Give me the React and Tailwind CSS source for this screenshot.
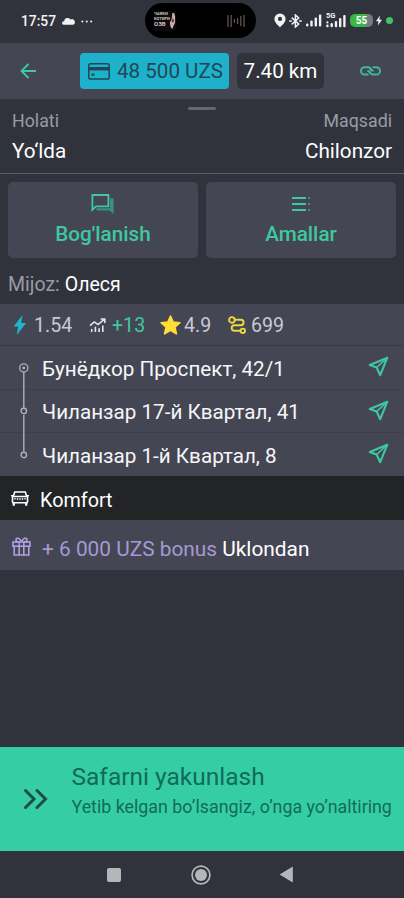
const stops = [
  { id: 1, address: "Бунёдкор Проспект, 42/1", start: true },
  { id: 2, address: "Чиланзар 17-й Квартал, 41" },
  { id: 3, address: "Чиланзар 1-й Квартал, 8" },
];

const Signal = ({ className }) => (
  <svg className={className} viewBox="0 0 16 13" fill="#f1f1f3">
    <rect x="0" y="9.5" width="2.4" height="3" rx="1" />
    <rect x="4.3" y="6.5" width="2.4" height="6" rx="1" />
    <rect x="8.6" y="3.5" width="2.4" height="9" rx="1" />
    <rect x="12.9" y="0.5" width="2.4" height="12" rx="1" />
  </svg>
);

const StatusBar = () => (
  <div className="flex h-[43px] shrink-0 items-start text-[#f1f1f3]">
    <div className="flex h-[42px] w-[145px] items-center pl-[21px]">
      <span className="w-[36px] whitespace-nowrap text-[13.8px] font-medium">17:57</span>
      <svg className="ml-[5px] h-[8px] w-[13px]" viewBox="0 0 13 8" fill="currentColor">
        <path d="M1.6 7.8A1.8 1.8 0 0 1 2.1 4.2 3.5 3.5 0 0 1 8.4 2.4 2.8 2.8 0 0 1 11.2 7.8Z" />
      </svg>
      <svg className="ml-[6px] h-[3px] w-[12px]" viewBox="0 0 12 3" fill="currentColor">
        <circle cx="1.4" cy="1.5" r="1" />
        <circle cx="5.8" cy="1.5" r="1" />
        <circle cx="10.2" cy="1.5" r="1" />
      </svg>
    </div>

    {/* Media pill around the camera */}
    <div className="mt-[3px] flex h-[35px] w-[111px] items-center justify-between rounded-full bg-black pl-[9px] pr-[11px]">
      <div className="relative flex h-[20px] w-[22px] flex-col bg-[#0e0b0c] pt-[1px] font-bold text-[#c9c2c1]">
        <span className="text-[4px] leading-[4px]">ЧАЙКИ</span>
        <span className="text-[4px] leading-[5px]">КОТИРИ</span>
        <span className="text-[6px] leading-[6px]">ОЗВ</span>
        <svg className="absolute right-0 top-0 h-[20px] w-[8px]" viewBox="0 0 9 20">
          <path d="M5 1 7 1 8 5 8 12 6 16 5 19 3 17 2 12 4 8Z" fill="#c5b0ab" />
          <path d="M5 7 7 9 6 12 4 11Z" fill="#6f3434" />
        </svg>
      </div>
      <svg className="h-[16px] w-[18px]" viewBox="0 0 18 16" stroke="#61524f" strokeWidth="1.3">
        <path d="M1 2V14M4.2 2V14M7.4 6V10M10.6 5V11M13.8 3V13M17 2V14" />
      </svg>
    </div>

    <div className="flex h-[41px] items-center">
      <svg className="ml-[18px] h-[15px] w-[12px]" viewBox="0 0 12 15" fillRule="evenodd" fill="currentColor">
        <path d="M6 .5A5.6 5.6 0 0 0 .4 6C.4 9.5 4 12 6 14.5 8 12 11.6 9.5 11.6 6A5.6 5.6 0 0 0 6 .5ZM6 3.8a2.1 2.1 0 1 1 0 4.2 2.1 2.1 0 0 1 0-4.2Z" />
      </svg>
      <svg className="ml-[3px] h-[14px] w-[13px]" viewBox="0 0 13 14" fill="none" stroke="currentColor" strokeWidth="1.5">
        <path d="m2.7 3.6 7 6.4-3.3 3V1l3.3 3-7 6.4" />
        <path d="M.7 7h1.6M10.7 7h1.6" strokeLinecap="round" />
      </svg>
      <Signal className="ml-[4px] h-[13px] w-[16px]" />
      <div className="relative ml-[4px] h-[15px] w-[20px]">
        <span className="absolute -top-[1px] left-0 text-[7.5px] font-bold leading-[7px]">5G</span>
        <svg className="h-[15px] w-[20px]" viewBox="0 0 20 15" fill="currentColor">
          <circle cx="1.4" cy="9.4" r="1.1" />
          <rect x="0.2" y="11.5" width="2.4" height="2.7" rx="1" />
          <rect x="4.5" y="10" width="2.4" height="4.2" rx="1" />
          <rect x="8.8" y="8" width="2.4" height="6.2" rx="1" />
          <rect x="13" y="5" width="2.4" height="9.2" rx="1" />
          <rect x="17.2" y="2" width="2.4" height="12.2" rx="1" />
        </svg>
      </div>
      <div className="ml-[4px] flex h-[13px] w-[23px] items-center justify-center rounded-[5px] bg-linear-to-r from-[#37b944] from-70% to-[#77797f] to-70% text-[10px] font-bold leading-none text-white">
        55
      </div>
      <svg className="ml-[3px] h-[11px] w-[6px]" viewBox="0 0 6 10" fill="currentColor">
        <path d="M4 0 0 5.7H2.5L1.9 10 6 4.2H3.4Z" />
      </svg>
      <span className="ml-[4px] size-[7px] rounded-full bg-[#3fc667]" />
    </div>
  </div>
);

const Header = () => (
  <div className="flex h-[56px] shrink-0 items-center bg-[#454653]">
    <svg className="ml-[20px] h-[16px] w-[17px]" viewBox="0 0 17 16" fill="none" stroke="#3fcba0" strokeWidth="1.8">
      <path d="M16 8H1.5M8.5 1 1.5 8l7 7" />
    </svg>
    <div className="ml-[43px] flex h-[36px] w-[149px] items-center rounded-[4px] bg-[#1eb1cb] pl-[8px] text-[#224754]">
      <svg className="h-[17px] w-[22px]" viewBox="0 0 22 17" fill="none" stroke="currentColor">
        <rect x=".8" y=".8" width="20.4" height="15.2" rx="1.8" strokeWidth="1.5" />
        <path d="M1 5.7H21" strokeWidth="3.4" />
        <path d="M3.5 11.6H6.5" strokeWidth="2.2" />
      </svg>
      <span className="ml-[7px] whitespace-nowrap text-[20.6px]">48 500 UZS</span>
    </div>
    <div className="ml-[8px] flex h-[36px] w-[87px] items-center justify-center whitespace-nowrap rounded-[5px] bg-[#31333c] text-[20.6px] text-white">
      7.40 km
    </div>
    <svg className="ml-[36px] h-[10px] w-[21px]" viewBox="0 0 21 10" fill="none" stroke="#3fb895" strokeWidth="2" strokeLinecap="round">
      <path d="M7.6 8.6H4.7a3.7 3.7 0 0 1 0-7.4h3.2c1.9 0 3 1.3 3 3.2" />
      <path d="M13.4 1.2h2.9a3.7 3.7 0 0 1 0 7.4h-3.2c-2.6 0-2.8-2.4-5-3.6" />
      <path d="M10.6 2.6 13 5" strokeWidth="1.6" />
    </svg>
  </div>
);

const TripStatus = () => (
  <div className="flex h-[75px] shrink-0 flex-col border-b border-[#5c5e66]">
    <div className="mx-auto mt-[8px] h-[3px] w-[28px] shrink-0 rounded-full bg-[#65676f]" />
    <div className="flex h-[22px] items-center justify-between px-[12px] text-[17.8px] leading-[22px] text-[#9a9ba4]">
      <span>Holati</span>
      <span>Maqsadi</span>
    </div>
    <div className="mt-[6px] flex items-center justify-between px-[12px] text-[20.7px] leading-[26px] text-white">
      <span>Yo‘lda</span>
      <span>Chilonzor</span>
    </div>
  </div>
);

const ActionButton = ({ icon, label }) => (
  <button className="flex h-[76px] w-[190px] flex-col items-center rounded-[5px] bg-[#454653] pt-[10px] text-[#3ec8a0]">
    <span className="flex h-[24px] items-center justify-center">{icon}</span>
    <span className="mt-[5px] text-[20.7px] font-medium leading-[26px]">{label}</span>
  </button>
);

const ChatIcon = () => (
  <svg className="h-[21px] w-[24px]" viewBox="0 0 24 21">
    <path d="M19 4.5H22.6V20L18.6 16.6H5.5V14.2H19Z" fill="#37937e" />
    <path d="M1.4 1H17.4V12.4H5L1.4 15.8Z" fill="none" stroke="#3ec8a0" strokeWidth="1.8" />
  </svg>
);

const ListIcon = () => (
  <svg className="h-[16px] w-[19px]" viewBox="0 0 19 16" fill="#3ec8a0">
    <path d="M0 1H14V3H0ZM0 7H14V9H0ZM0 13H14V15H0Z" />
    <path d="M16 1H18V3H16ZM16 7H18V9H16ZM16 13H18V15H16Z" fill="#37937e" />
  </svg>
);

const Stats = () => (
  <div className="flex h-[42px] shrink-0 items-center border-b border-[#393b44] bg-[#454653] pt-[3px] text-[19.6px] text-[#c9cad2]">
    <svg className="mb-[2px] ml-[13px] h-[20px] w-[14px]" viewBox="0 0 14 20" fill="#22b3ce">
      <path d="M9.5 0 .6 11.4H5.2L3.7 20 13.2 8.1H8.2Z" />
    </svg>
    <span className="ml-[7px] w-[38px] whitespace-nowrap">1.54</span>
    <svg className="mb-[2px] ml-[17px] h-[15px] w-[18px]" viewBox="0 0 18 15" fill="none" stroke="#e3e4ea" strokeWidth="1.6">
      <path d="M1 7.6 5.2 3.9 9 6.5 15.5 1.2M11.6 1H15.8V5" />
      <path d="M2.7 11V14M6.4 8.8V14M10.1 10.3V14M13.8 7.6V14" />
    </svg>
    <span className="ml-[5px] w-[33px] whitespace-nowrap text-[#3ec8a0]">+13</span>
    <svg className="mb-[2px] ml-[15px] h-[20px] w-[21px]" viewBox="0 0 21 20" fill="#fddd35" stroke="#fddd35" strokeWidth="1.6" strokeLinejoin="round">
      <path d="m10.5 1 2.7 6.1 6.7.6-5 4.5 1.5 6.6-5.9-3.5-5.9 3.5 1.5-6.6-5-4.5 6.7-.6Z" />
    </svg>
    <span className="ml-[3px] w-[27px] whitespace-nowrap">4.9</span>
    <svg className="mb-[3px] ml-[17px] h-[18px] w-[18px]" viewBox="0 0 18 18" fill="none" stroke="#ecd93f" strokeWidth="1.9">
      <circle cx="3.9" cy="3.9" r="2.8" />
      <circle cx="14.8" cy="14.8" r="2.2" />
      <path d="M6.8 3.8H12.9a2.7 2.7 0 0 1 0 5.4H6.5a2.8 2.8 0 0 0 0 5.6h6" />
    </svg>
    <span className="ml-[5px] whitespace-nowrap">699</span>
  </div>
);

const StopRow = ({ stop, last }) => (
  <div className="flex h-[43.5px] items-center border-b border-[#3d3f49]">
    <svg className="ml-[17px] h-[43.5px] w-[14px] shrink-0 overflow-visible" viewBox="0 0 14 43.5" fill="none" stroke="#aeb0ba">
      {!last && <path d="M6.8 26V62.6" strokeWidth="1.4" />}
      {stop.start ? (
        <>
          <circle cx="6.8" cy="21.9" r="4.1" strokeWidth="1.3" />
          <circle cx="6.8" cy="21.9" r="1.4" fill="#aeb0ba" stroke="none" />
        </>
      ) : (
        <circle cx="6.8" cy="21.9" r="2.7" strokeWidth="1.4" />
      )}
    </svg>
    <span className="ml-[11px] flex-1 whitespace-nowrap pt-[3px] text-[20.65px] leading-[26px] text-[#f6f6f9]">
      {stop.address}
    </span>
    <svg className="mb-[1px] mr-[15px] size-[21px]" viewBox="0 0 21 21" fill="none" stroke="#3ec8a0" strokeWidth="2.1" strokeLinejoin="round">
      <path d="M19.3 1.7 1.8 9 8.6 11.5 12.2 19.2Z" />
      <path d="M19.3 1.7 8.6 11.5" strokeWidth="1.6" />
    </svg>
  </div>
);

const Tariff = () => (
  <div className="flex h-[44px] shrink-0 items-center bg-[#222426] pl-[11px] text-white">
    <svg className="h-[15px] w-[18px]" viewBox="0 0 18 15" fill="none" stroke="currentColor" strokeWidth="1.6">
      <path d="M2.3 5.5 3.7 1H14.3L15.7 5.5M0 4.7H2M16 4.7H18" />
      <rect x="1.5" y="5.5" width="15" height="6.2" rx=".8" />
      <path d="M2.8 12V14.8M15.2 12V14.8" strokeWidth="2.2" />
      <path d="M3 7.8H5.3M12.7 7.8H15M6.7 7V9.2M9 7V9.2M11.3 7V9.2" strokeWidth="1" />
    </svg>
    <span className="ml-[11px] pt-[5px] text-[19.8px] leading-[26px]">Komfort</span>
  </div>
);

const Bonus = () => (
  <div className="flex h-[50px] shrink-0 items-center bg-[#454653] pl-[12px]">
    <svg className="mt-[3px] h-[19px] w-[19px]" viewBox="0 0 19 19" fill="none" stroke="#b1a0e0" strokeWidth="1.6">
      <rect x="1" y="5" width="17" height="4.2" />
      <path d="M2.2 9.2V18H16.8V9.2M7.2 5V18M11.8 5V18M9.5 5C8 1 4 0 4 2.8 4 4 5 5 6.5 5M9.5 5C11 1 15 0 15 2.8 15 4 14 5 12.5 5" />
    </svg>
    <span className="ml-[11px] whitespace-nowrap pt-[7px] text-[20.85px] leading-[26px] text-[#a699d3]">
      + 6 000 UZS bonus <span className="text-white">Uklondan</span>
    </span>
  </div>
);

const FinishSlider = () => (
  <div className="flex h-[104px] shrink-0 bg-[#35cea4]">
    <svg className="ml-[23px] mt-[41px] h-[22px] w-[26px]" viewBox="0 0 26 22" fill="none" stroke="#1d4a4b" strokeWidth="3" strokeLinecap="round">
      <path d="m2.5 2.5 8.5 8.5-8.5 8.5M14 2.5l8.5 8.5-8.5 8.5" />
    </svg>
    <div className="ml-[22.5px] whitespace-nowrap pt-[14px] text-[#126b58]">
      <p className="text-[24.5px] leading-[32px]">Safarni yakunlash</p>
      <p className="text-[17.82px] leading-[28px]">Yetib kelgan bo’lsangiz, o’nga yo’naltiring</p>
    </div>
  </div>
);

const NavBar = () => (
  <div className="flex h-[47px] shrink-0 items-center pl-[107px]">
    <span className="size-[14px] rounded-[2px] bg-[#b5b6ba]" />
    <svg className="ml-[70px] size-[20px]" viewBox="0 0 20 20">
      <circle cx="10" cy="10" r="8.9" fill="none" stroke="#b5b6ba" strokeWidth="1.7" />
      <circle cx="10" cy="10" r="6" fill="#b5b6ba" />
    </svg>
    <svg className="ml-[68px] h-[17px] w-[14px]" viewBox="0 0 14 17" fill="#b5b6ba">
      <path d="M13.8 .4V16.6L.6 8.5Z" />
    </svg>
  </div>
);

export default function App() {
  return (
    <div className="flex h-[898px] w-[404px] flex-col overflow-hidden bg-[#31333c] font-['Roboto',sans-serif]">
      <StatusBar />
      <Header />
      <TripStatus />
      <div className="flex gap-[8px] px-[8px] pt-[8px]">
        <ActionButton icon={<ChatIcon />} label="Bog'lanish" />
        <ActionButton icon={<ListIcon />} label="Amallar" />
      </div>
      <div className="flex h-[46px] shrink-0 items-center gap-[5px] px-[8px] pt-[7px] text-[19.5px]">
        <span className="text-[#9a9ba4]">Mijoz:</span>
        <span className="text-white">Олеся</span>
      </div>
      <Stats />
      <div className="flex h-[130px] shrink-0 flex-col bg-[#454653]">
        {stops.map((stop, i) => (
          <StopRow key={stop.id} stop={stop} last={i === stops.length - 1} />
        ))}
      </div>
      <Tariff />
      <Bonus />
      <div className="flex-1" />
      <FinishSlider />
      <NavBar />
    </div>
  );
}
